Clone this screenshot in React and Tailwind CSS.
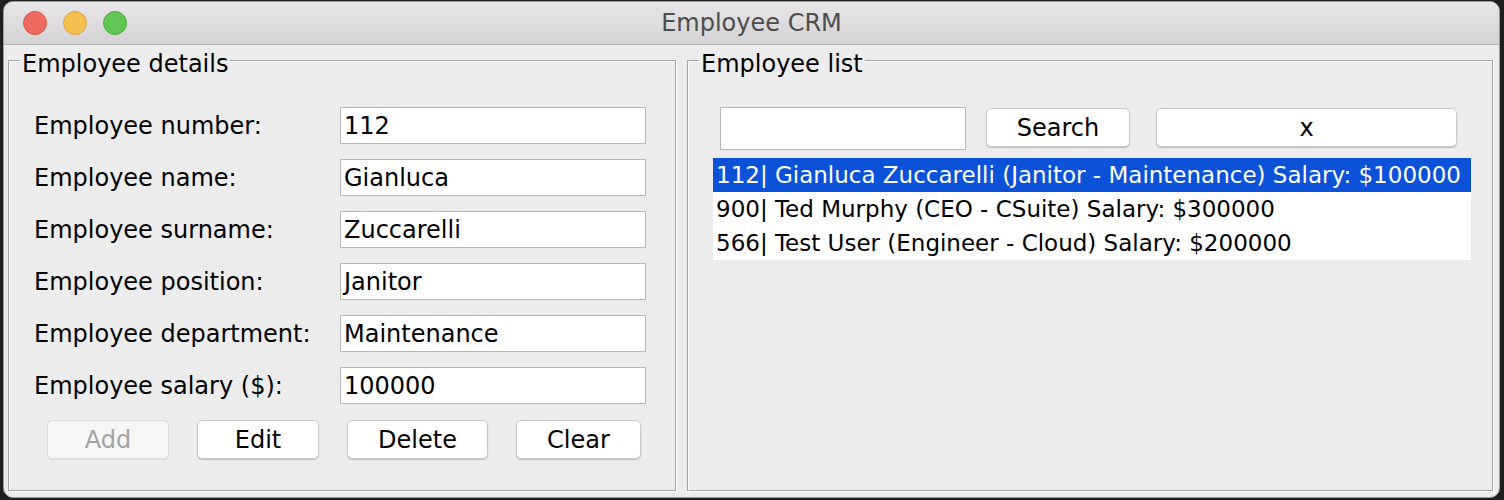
import React from "react";

const font = { fontFamily: '"DejaVu Sans", "Liberation Sans", sans-serif' };

function Field({ value }) {
  return (
    <div className="w-[306px] h-[37px] border border-[#b8b8b8] bg-white px-[3px] flex items-center text-[24px] text-black leading-none">
      {value}
    </div>
  );
}

function Btn({ children, w, disabled }) {
  return (
    <div
      className={
        "h-[39px] rounded-[5px] border flex items-center justify-center text-[24px] leading-none " +
        (disabled
          ? "bg-[#f6f6f6] border-[#dcdcdc] text-[#a3a3a3] shadow-[0_1px_1px_rgba(0,0,0,0.08)]"
          : "bg-white border-[#c9c9c9] text-black shadow-[0_1px_1px_rgba(0,0,0,0.2)]")
      }
      style={{ width: w }}
    >
      {children}
    </div>
  );
}

const rows = [
  ["Employee number:", "112"],
  ["Employee name:", "Gianluca"],
  ["Employee surname:", "Zuccarelli"],
  ["Employee position:", "Janitor"],
  ["Employee department:", "Maintenance"],
  ["Employee salary ($):", "100000"],
];

const list = [
  "112| Gianluca Zuccarelli (Janitor - Maintenance) Salary: $100000",
  "900| Ted Murphy (CEO - CSuite) Salary: $300000",
  "566| Test User (Engineer - Cloud) Salary: $200000",
];

export default function App() {
  return (
    <div className="w-[1504px] h-[500px] bg-[#1f1f1f] pt-[1px] pl-[3px] pr-[4px] pb-[2px]" style={font}>
      <div className="w-full h-full rounded-[10px] overflow-hidden bg-[#ececec] flex flex-col border border-[#9a9a9a]">
        {/* Title bar */}
        <div className="h-[43px] shrink-0 bg-gradient-to-b from-[#e8e6e8] to-[#d4d2d4] border-b border-[#b4b4b4] flex items-center relative">
          <div className="flex items-center gap-[16px] pl-[19px]">
            <div className="w-[24px] h-[24px] rounded-full bg-[#ee6a5e] border border-[#d5574c]" />
            <div className="w-[24px] h-[24px] rounded-full bg-[#f5bf4f] border border-[#d9a440]" />
            <div className="w-[24px] h-[24px] rounded-full bg-[#61c554] border border-[#4fa93f]" />
          </div>
          <div className="absolute inset-0 flex items-center justify-center text-[24px] text-[#4d4d4d]">
            Employee CRM
          </div>
        </div>

        {/* Content */}
        <div className="flex gap-[11px] pl-[4px] pt-[15px]">
          {/* Left panel */}
          <div className="w-[668px] h-[431px] border border-[#a4a4a4] shadow-[inset_1px_1px_0_#ffffff,1px_1px_0_#ffffff] flex flex-col">
            <div className="-mt-[11px] ml-[11px] px-[2px] w-fit bg-[#ececec] text-[24px] leading-[28px] text-black">
              Employee details
            </div>
            <div className="mt-[29px] pl-[25px] flex flex-col gap-[15px]">
              {rows.map(([l, v]) => (
                <div key={l} className="flex items-center">
                  <div className="w-[306px] text-[24px] text-black leading-none">{l}</div>
                  <Field value={v} />
                </div>
              ))}
            </div>
            <div className="mt-[16px] pl-[38px] flex gap-[28px]">
              <Btn w={122} disabled>Add</Btn>
              <Btn w={122}>Edit</Btn>
              <Btn w={141}>Delete</Btn>
              <Btn w={125}>Clear</Btn>
            </div>
          </div>

          {/* Right panel */}
          <div className="w-[806px] h-[431px] border border-[#a4a4a4] shadow-[inset_1px_1px_0_#ffffff,1px_1px_0_#ffffff] flex flex-col">
            <div className="-mt-[11px] ml-[11px] px-[2px] w-fit bg-[#ececec] text-[24px] leading-[28px] text-black">
              Employee list
            </div>
            <div className="mt-[29px] pl-[32px] flex items-start">
              <div className="w-[246px] h-[43px] border border-[#b8b8b8] bg-white" />
              <div className="ml-[20px] mt-[1px]">
                <Btn w={144}>Search</Btn>
              </div>
              <div className="ml-[26px] mt-[1px]">
                <Btn w={301}>x</Btn>
              </div>
            </div>
            <div className="mt-[8px] ml-[25px] w-[758px] bg-white flex flex-col">
              {list.map((t, i) => (
                <div
                  key={t}
                  className={
                    "h-[34px] px-[3px] flex items-center text-[23px] leading-none whitespace-nowrap " +
                    (i === 0 ? "bg-[#0b52d8] text-white" : "text-black")
                  }
                >
                  {t}
                </div>
              ))}
            </div>
          </div>
        </div>
      </div>
    </div>
  );
}
